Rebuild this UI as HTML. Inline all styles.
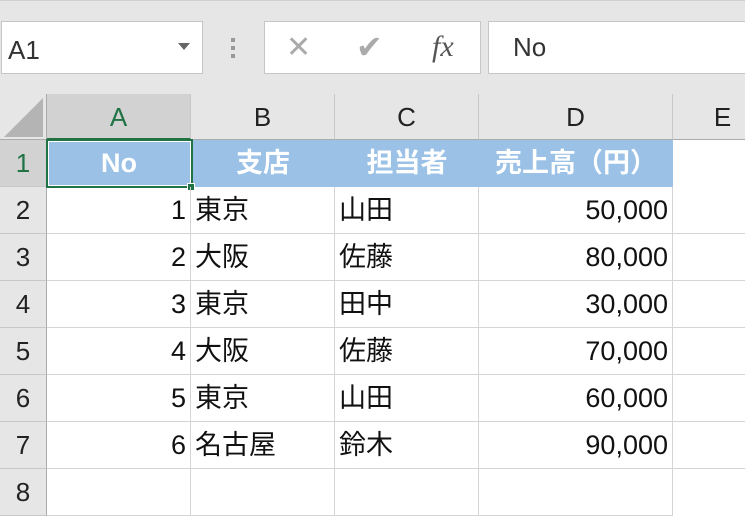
<!DOCTYPE html><html><head><meta charset="utf-8"><style>
*{margin:0;padding:0;box-sizing:border-box}
body{width:745px;height:485px;overflow:hidden;background:#fff;font-family:"Liberation Sans","Noto Sans CJK JP",sans-serif;position:relative}
.abs{position:absolute}
.top{left:0;top:0;width:745px;height:94px;background:#e6e6e6;border-top:1px solid #d0d0d0}
.box{background:#fff;border:1px solid #c6c6c6}
.ch{top:94px;height:46px;background:#e6e6e6;border-right:1px solid #c8c8c8;border-bottom:1px solid #ababab;font-size:26px;text-align:center;line-height:46px;color:#222}
.rh{left:0;width:47px;height:47px;background:#e6e6e6;border-bottom:1px solid #c8c8c8;border-right:1px solid #ababab;font-size:26px;text-align:center;line-height:47px;color:#222}
.c{height:47px;border-right:1px solid #d4d4d4;border-bottom:1px solid #d4d4d4;font-size:27px;line-height:47px;padding:0 4px;color:#111;white-space:nowrap}
.h{background:#9bc2e6;color:#fff;font-weight:bold;text-align:center;border-right:none;border-bottom:none}
.r{text-align:right}
</style></head><body>
<div class="abs top"></div>
<div class="abs box" style="left:1px;top:21px;width:202px;height:53px;font-size:26px;line-height:56px;padding-left:6px;color:#333">A1</div>
<div class="abs" style="left:178px;top:43px;width:0;height:0;border-left:6px solid transparent;border-right:6px solid transparent;border-top:7px solid #666"></div>
<div class="abs" style="left:231px;top:38px;width:4px;height:20px;background:repeating-linear-gradient(#999 0 4px,transparent 4px 8px)"></div>
<div class="abs box" style="left:264px;top:21px;width:217px;height:53px"></div>
<div class="abs" style="left:286px;top:30px;font-size:30px;color:#aaa">✕</div>
<div class="abs" style="left:356px;top:28px;font-size:32px;color:#aaa">✔</div>
<div class="abs" style="left:432px;top:30px;font-size:30px;color:#555;font-family:'Liberation Serif',serif;font-style:italic">fx</div>
<div class="abs box" style="left:488px;top:21px;width:260px;height:53px;font-size:26px;line-height:50px;padding-left:24px;color:#333">No</div>
<div class="abs" style="left:0;top:94px;width:47px;height:46px;background:#e6e6e6;border-right:1px solid #ababab;border-bottom:1px solid #ababab"></div>
<div class="abs" style="left:4px;top:98px;width:0;height:0;border-left:39px solid transparent;border-bottom:39px solid #b4b4b4"></div>
<div class="abs ch" style="left:47px;width:144px;background:#d2d2d2;color:#217346;border-bottom:2px solid #217346">A</div>
<div class="abs ch" style="left:191px;width:144px">B</div>
<div class="abs ch" style="left:335px;width:144px">C</div>
<div class="abs ch" style="left:479px;width:194px">D</div>
<div class="abs ch" style="left:673px;width:100px">E</div>
<div class="abs rh" style="top:140px;background:#d2d2d2;color:#217346">1</div>
<div class="abs rh" style="top:187px">2</div><div class="abs rh" style="top:234px">3</div><div class="abs rh" style="top:281px">4</div><div class="abs rh" style="top:328px">5</div><div class="abs rh" style="top:375px">6</div><div class="abs rh" style="top:422px">7</div><div class="abs rh" style="top:469px">8</div>
<div class="abs c h" style="left:47px;top:140px;width:144px">No</div>
<div class="abs c h" style="left:191px;top:140px;width:144px">支店</div>
<div class="abs c h" style="left:335px;top:140px;width:144px">担当者</div>
<div class="abs c h" style="left:479px;top:140px;width:194px">売上高（円）</div>
<div class="abs" style="left:46px;top:139px;width:147px;height:49px;border:2px solid #217346"></div>
<div class="abs" style="left:48px;top:141px;width:143px;height:45px;border:1px solid #fff"></div>
<div class="abs" style="left:187px;top:183px;width:8px;height:8px;background:#217346;border:1px solid #fff"></div>
<div class="abs" style="left:47px;top:187px">
<div class="abs c r" style="left:0;top:0;width:144px">1</div><div class="abs c" style="left:144px;top:0;width:144px">東京</div><div class="abs c" style="left:288px;top:0;width:144px">山田</div><div class="abs c r" style="left:432px;top:0;width:194px">50,000</div><div class="abs c" style="left:626px;top:0;width:100px"></div>
<div class="abs c r" style="left:0;top:47px;width:144px">2</div><div class="abs c" style="left:144px;top:47px;width:144px">大阪</div><div class="abs c" style="left:288px;top:47px;width:144px">佐藤</div><div class="abs c r" style="left:432px;top:47px;width:194px">80,000</div><div class="abs c" style="left:626px;top:47px;width:100px"></div>
<div class="abs c r" style="left:0;top:94px;width:144px">3</div><div class="abs c" style="left:144px;top:94px;width:144px">東京</div><div class="abs c" style="left:288px;top:94px;width:144px">田中</div><div class="abs c r" style="left:432px;top:94px;width:194px">30,000</div><div class="abs c" style="left:626px;top:94px;width:100px"></div>
<div class="abs c r" style="left:0;top:141px;width:144px">4</div><div class="abs c" style="left:144px;top:141px;width:144px">大阪</div><div class="abs c" style="left:288px;top:141px;width:144px">佐藤</div><div class="abs c r" style="left:432px;top:141px;width:194px">70,000</div><div class="abs c" style="left:626px;top:141px;width:100px"></div>
<div class="abs c r" style="left:0;top:188px;width:144px">5</div><div class="abs c" style="left:144px;top:188px;width:144px">東京</div><div class="abs c" style="left:288px;top:188px;width:144px">山田</div><div class="abs c r" style="left:432px;top:188px;width:194px">60,000</div><div class="abs c" style="left:626px;top:188px;width:100px"></div>
<div class="abs c r" style="left:0;top:235px;width:144px">6</div><div class="abs c" style="left:144px;top:235px;width:144px">名古屋</div><div class="abs c" style="left:288px;top:235px;width:144px">鈴木</div><div class="abs c r" style="left:432px;top:235px;width:194px">90,000</div><div class="abs c" style="left:626px;top:235px;width:100px"></div>
<div class="abs c" style="left:0;top:282px;width:144px"></div><div class="abs c" style="left:144px;top:282px;width:144px"></div><div class="abs c" style="left:288px;top:282px;width:144px"></div><div class="abs c" style="left:432px;top:282px;width:194px"></div>
</div>
</body></html>
